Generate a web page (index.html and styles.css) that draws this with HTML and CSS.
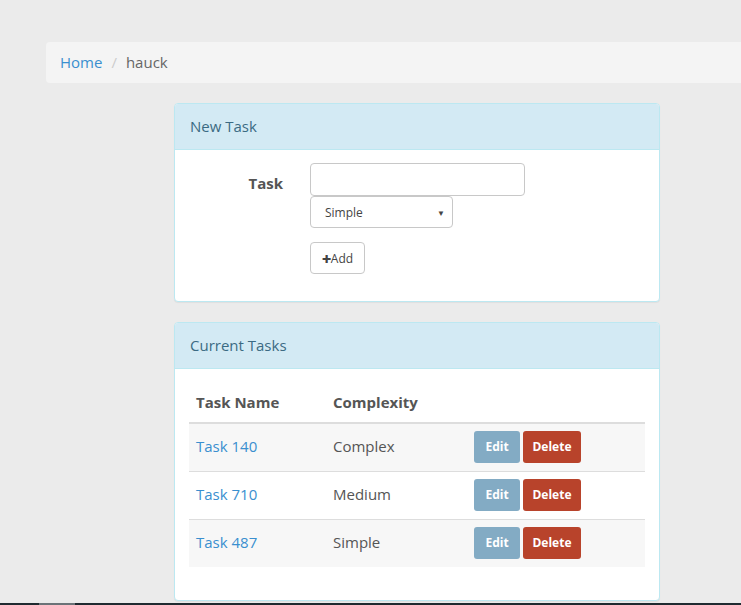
FILE: index.html
```html
<!DOCTYPE html>
<html>
<head>
<meta charset="utf-8">
<link rel="stylesheet" href="styles.css">
</head>
<body>
<div class="page">
  <ol class="breadcrumb">
    <li><a href="#">Home</a></li>
    <li class="sep">/</li>
    <li class="active">hauck</li>
  </ol>
  <div class="content">
    <div class="panel">
      <div class="panel-heading">New Task</div>
      <div class="panel-body form-body">
        <div class="form-row">
          <label class="form-label">Task</label>
          <div class="form-fields">
            <input class="text-input" type="text">
            <div class="select"><span>Simple</span><span class="caret">▼</span></div>
            <button class="btn-add"><span class="plus">✚</span>Add</button>
          </div>
        </div>
      </div>
    </div>
    <div class="panel">
      <div class="panel-heading">Current Tasks</div>
      <div class="panel-body table-body">
        <table class="tasks">
          <thead>
            <tr><th class="c1">Task Name</th><th class="c2">Complexity</th><th></th></tr>
          </thead>
          <tbody>
            <tr class="odd"><td><a href="#">Task 140</a></td><td>Complex</td><td class="actions"><span class="btn edit">Edit</span><span class="btn del">Delete</span></td></tr>
            <tr><td><a href="#">Task 710</a></td><td>Medium</td><td class="actions"><span class="btn edit">Edit</span><span class="btn del">Delete</span></td></tr>
            <tr class="odd"><td><a href="#">Task 487</a></td><td>Simple</td><td class="actions"><span class="btn edit">Edit</span><span class="btn del">Delete</span></td></tr>
          </tbody>
        </table>
      </div>
    </div>
  </div>
</div>
<div class="scrollbar"><div class="thumb"></div></div>
</body>
</html>
```
FILE: styles.css
```css
html, body {
  margin: 0;
  padding: 0;
  height: 100%;
  overflow: hidden;
}
body {
  background: #ebebeb;
  font-family: "Open Sans", "Lato", sans-serif;
  font-size: 15px;
  color: #555;
  position: relative;
}
.page {
  padding-top: 42px;
}
.breadcrumb {
  list-style: none;
  margin: 0 0 20px 46px;
  padding: 0 14px 2px;
  height: 39px;
  background: #f4f4f4;
  border-radius: 4px 0 0 4px;
  display: flex;
  align-items: center;
  gap: 9px;
  font-size: 15px;
  font-weight: 500;
}
.breadcrumb a {
  color: #3a8fcf;
  text-decoration: none;
}
.breadcrumb .sep {
  color: #ccc;
}
.breadcrumb .active {
  color: #666;
}
.content {
  padding-left: 174px;
  width: 486px;
}
.panel {
  background: #fff;
  border: 1px solid #bce8f1;
  border-radius: 4px;
  margin-bottom: 20px;
  box-shadow: 0 1px 1px rgba(0,0,0,0.05);
}
.panel-heading {
  background: #d3eaf4;
  border-bottom: 1px solid #bce8f1;
  border-radius: 3px 3px 0 0;
  height: 43px;
  padding: 0 15px 2px;
  display: flex;
  align-items: center;
  color: #3b6a83;
  font-size: 15px;
  font-weight: 500;
}
.form-body {
  padding: 13px 15px 27px;
}
.form-row {
  display: flex;
}
.form-label {
  width: 93px;
  text-align: right;
  font-weight: bold;
  color: #555;
  padding-top: 10px;
  font-size: 15px;
}
.form-fields {
  margin-left: 27px;
  display: flex;
  flex-direction: column;
  align-items: flex-start;
}
.text-input {
  box-sizing: border-box;
  width: 215px;
  height: 33px;
  border: 1px solid #c8c8c8;
  border-radius: 4px;
  margin: 0;
}
.select {
  box-sizing: border-box;
  width: 143px;
  height: 32px;
  border: 1px solid #c8c8c8;
  border-radius: 4px;
  display: flex;
  align-items: center;
  justify-content: space-between;
  padding: 0 7px 0 14px;
  font-size: 12px;
  color: #444;
  margin-bottom: 14px;
}
.caret {
  font-size: 8px;
  color: #444;
}
.btn-add {
  box-sizing: border-box;
  width: 55px;
  height: 32px;
  background: #fff;
  border: 1px solid #c8c8c8;
  border-radius: 4px;
  font-family: inherit;
  font-size: 12px;
  color: #444;
  padding: 0;
}
.plus {
  font-size: 11px;
}
.table-body {
  padding: 15px 14px 33px;
}
.tasks {
  width: 100%;
  border-collapse: collapse;
}
.tasks th {
  text-align: left;
  font-weight: bold;
  color: #555;
  height: 39px;
  padding: 0 7px 2px;
  vertical-align: middle;
  border-bottom: 2px solid #ddd;
  box-sizing: border-box;
}
.tasks th.c1 { width: 137px; }
.tasks th.c2 { width: 141px; }
.tasks td {
  height: 48px;
  padding: 0 7px 3px;
  border-top: 1px solid #ddd;
  vertical-align: middle;
  color: #555;
  box-sizing: border-box;
}
.tasks td.actions {
  padding: 0 7px;
}
.tasks tbody tr:first-child td { border-top: none; }
.tasks tr.odd td {
  background: #f7f7f7;
}
.tasks a {
  color: #3a8fcf;
  text-decoration: none;
}
.btn {
  display: inline-block;
  height: 32px;
  line-height: 32px;
  border-radius: 3px;
  color: #fff;
  font-size: 12px;
  font-weight: bold;
  text-align: center;
  vertical-align: middle;
}
.edit {
  width: 46px;
  background: #83abc4;
  margin-right: 3px;
}
.del {
  width: 58px;
  background: #b8432b;
}
.scrollbar {
  position: absolute;
  left: 0;
  right: 0;
  bottom: 0;
  height: 2px;
  background: #1f2a30;
}
.thumb {
  position: absolute;
  left: 39px;
  width: 36px;
  height: 2px;
  background: #6b7378;
}
```
